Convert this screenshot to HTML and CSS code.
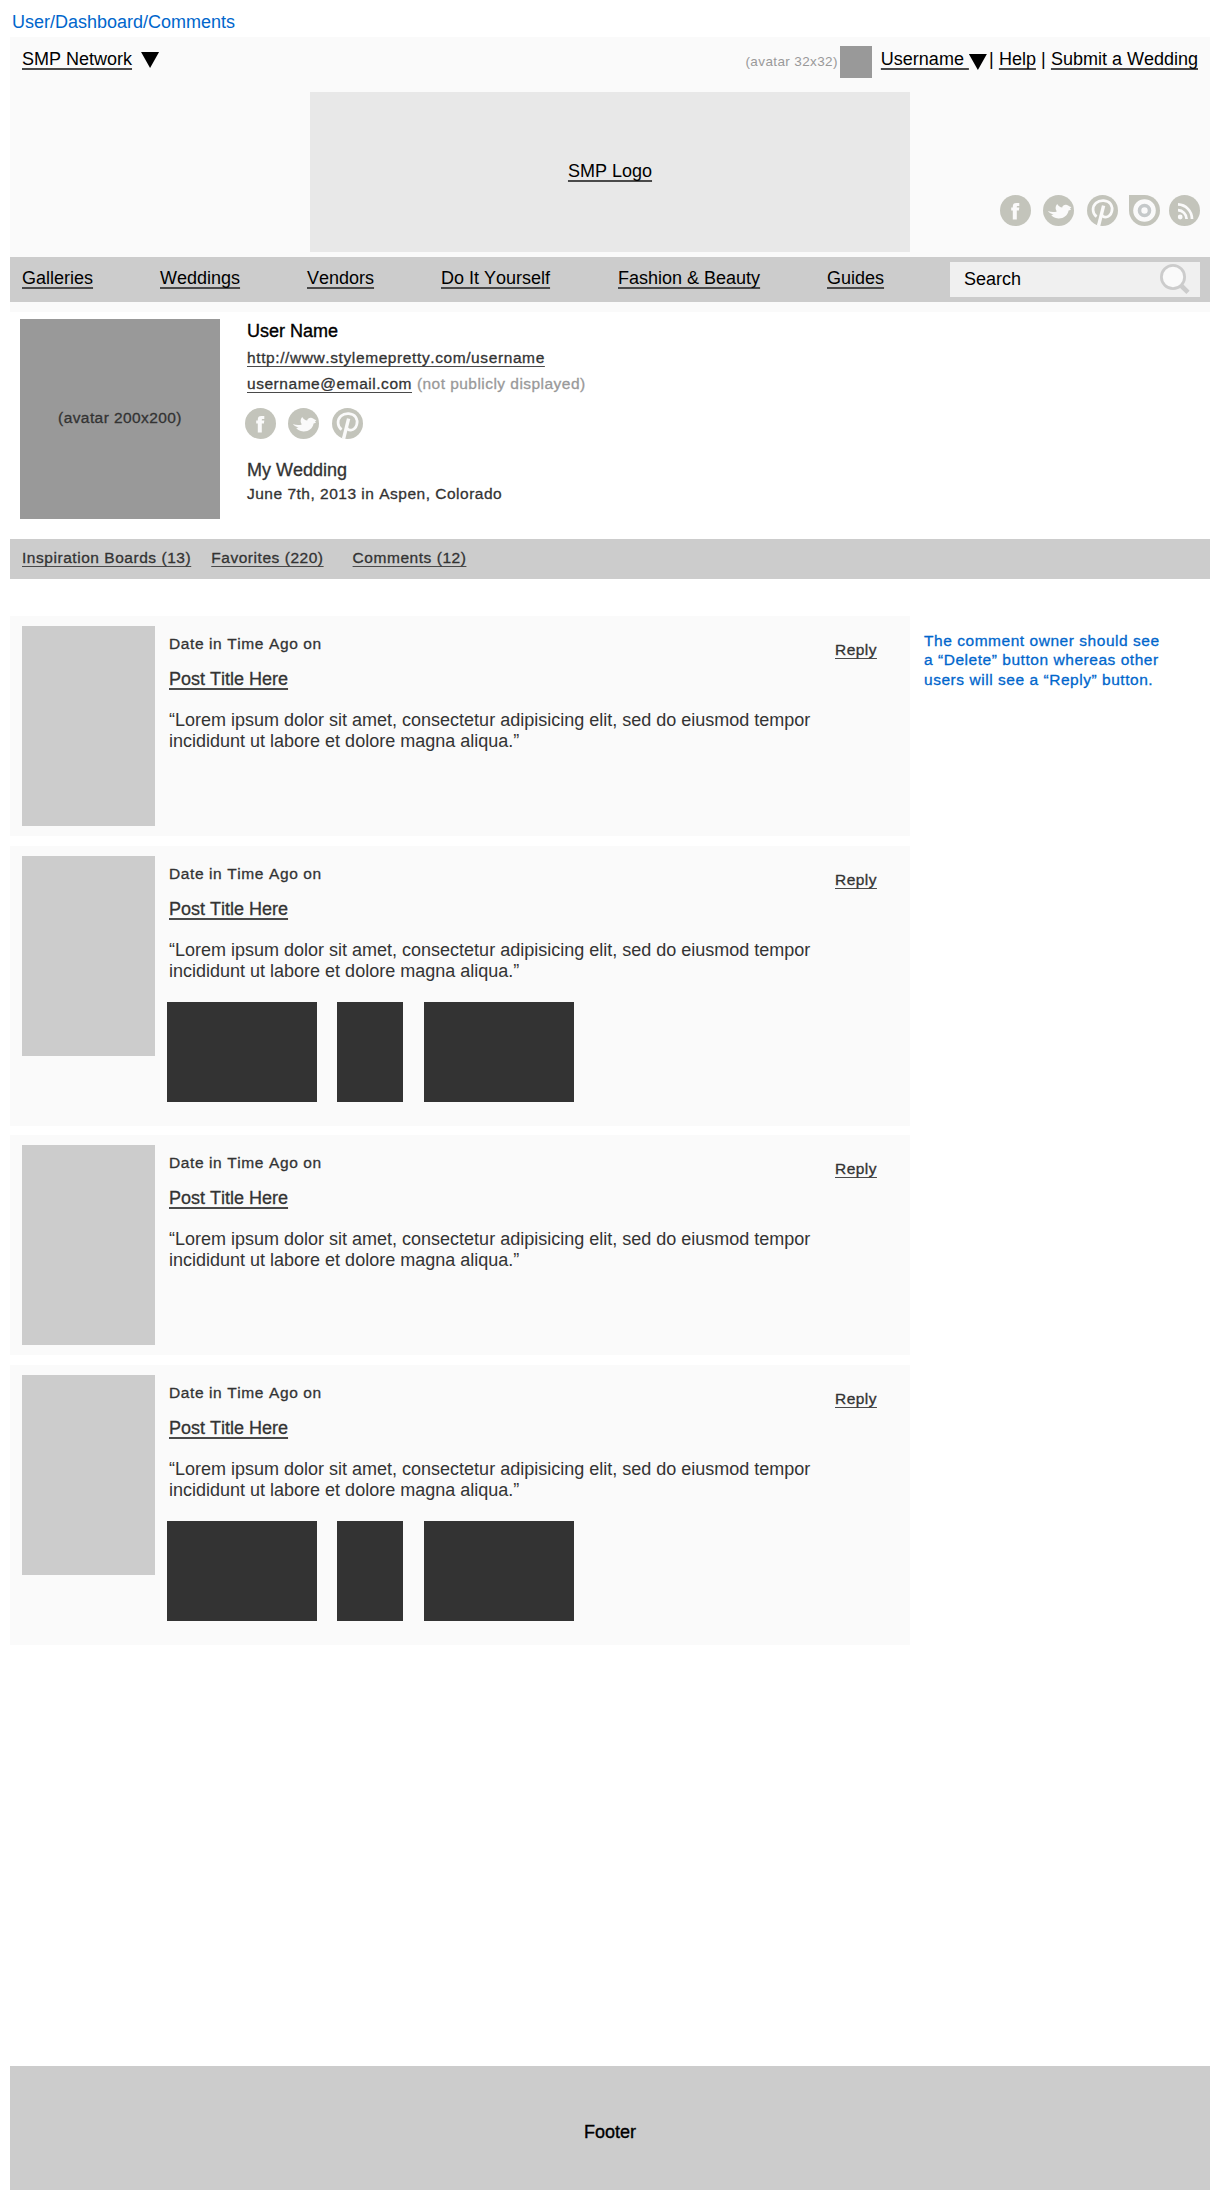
FILE: index.html
```html
<!DOCTYPE html>
<html lang="en">
<head>
<meta charset="utf-8">
<title>User/Dashboard/Comments</title>
<link rel="stylesheet" href="styles.css">
</head>
<body>
<svg class="sprite" width="0" height="0" aria-hidden="true">
  <symbol id="facebook" viewBox="0 0 31 31"><circle cx="15.5" cy="15.5" r="15.5"/><path class="w" d="M12.8 24.5V15.6H11.2V12.6H12.8V11.4C12.8 9.2 14 8 16.2 8H19.3V11H17.7C17 11 16.8 11.3 16.8 12V12.6H19.3L18.9 15.6H16.8V24.5Z"/></symbol>
  <symbol id="twitter" viewBox="0 0 31 31"><circle cx="15.5" cy="15.5" r="15.5"/><path class="w" d="M5 16C8 17.4 12 17.4 13.8 16.2C12.4 14.6 12 11.4 14.2 9C15.6 11.4 17.4 12.2 19.2 12.6C19.6 10.4 21.6 9.4 23.8 9.9C25 10.2 25.6 10.6 26.2 11.2L28.4 12.2L27 13.6L28 14.8L25.6 15.4C24.8 20.4 20.4 23.6 15.4 23.4C11.8 23.3 9.4 21.8 8.2 20L10.6 19.4C7.6 18.8 5.6 17.6 5 16Z"/></symbol>
  <symbol id="pinterest" viewBox="0 0 31 31"><circle cx="15.5" cy="15.5" r="15.5"/><path class="ws" d="M9.6 21.6C5 18.4 5 11.6 9 8C13 4.4 20.6 4.8 23.6 9C26.8 13.6 24.6 21 19.6 22C17.4 22.4 15.6 21.4 15 20"/><path class="ws stem" d="M16.6 10.6L11.5 31"/></symbol>
  <symbol id="target" viewBox="0 0 31 31"><path d="M0 0H15.5A15.5 15.5 0 1 1 0 15.5Z"/><circle class="w" cx="15.5" cy="15.5" r="11.3"/><circle class="hub" cx="15.5" cy="15.5" r="5"/></symbol>
  <symbol id="rss" viewBox="0 0 31 31"><circle cx="15.5" cy="15.5" r="15.5"/><circle class="w" cx="11.2" cy="22" r="2.4"/><path class="ws" d="M9 15.2A9 9 0 0 1 17.6 24M9 9.4A14.6 14.6 0 0 1 23 24"/></symbol>
</svg>

<p class="crumb">User/Dashboard/Comments</p>

<div class="page">
  <header class="header">
    <div class="topbar">
      <div class="network"><a>SMP Network</a><i class="caret"></i></div>
      <div class="account">
        <small>(avatar 32x32)</small><span class="avatar-sm"></span>
        <a class="user">Username </a><i class="caret"></i><span class="bar">|</span><a class="help">Help</a><span class="bar2">|</span><a>Submit a Wedding</a>
      </div>
    </div>
    <div class="brand">
      <div class="logo"><a>SMP Logo</a></div>
      <div class="social">
        <svg><use href="#facebook"/></svg><svg><use href="#twitter"/></svg><svg><use href="#pinterest"/></svg><svg><use href="#target"/></svg><svg><use href="#rss"/></svg>
      </div>
    </div>
    <nav class="nav">
      <a>Galleries</a><a>Weddings</a><a>Vendors</a><a>Do It Yourself</a><a>Fashion &amp; Beauty</a><a>Guides</a>
      <div class="search"><span>Search</span>
        <svg viewBox="0 0 30 30"><path d="M21.5 22L28 28.3"/><circle cx="13" cy="13" r="11.6"/></svg>
      </div>
    </nav>
  </header>

  <section class="profile">
    <div class="avatar-lg">(avatar 200x200)</div>
    <div class="info">
      <h1>User Name</h1>
      <p class="url"><a>http://www.stylemepretty.com/username</a></p>
      <p class="email"><a>username@email.com</a> <span>(not publicly displayed)</span></p>
      <div class="social"><svg><use href="#facebook"/></svg><svg><use href="#twitter"/></svg><svg><use href="#pinterest"/></svg></div>
      <h2>My Wedding</h2>
      <p class="date">June 7th, 2013 in Aspen, Colorado</p>
    </div>
  </section>

  <nav class="tabs"><a>Inspiration Boards (13)</a><a>Favorites (220)</a><a>Comments (12)</a></nav>

  <main class="main">
    <div class="comments">
      <article class="card">
        <div class="thumb"></div>
        <div class="body">
          <p class="when">Date in Time Ago on</p>
          <h3><a>Post Title Here</a></h3>
          <p class="quote">“Lorem ipsum dolor sit amet, consectetur adipisicing elit, sed do eiusmod tempor<br>incididunt ut labore et dolore magna aliqua.”</p>
        </div>
        <a class="reply">Reply</a>
      </article>
      <article class="card">
        <div class="thumb"></div>
        <div class="body">
          <p class="when">Date in Time Ago on</p>
          <h3><a>Post Title Here</a></h3>
          <p class="quote">“Lorem ipsum dolor sit amet, consectetur adipisicing elit, sed do eiusmod tempor<br>incididunt ut labore et dolore magna aliqua.”</p>
          <div class="images"><span></span><span></span><span></span></div>
        </div>
        <a class="reply">Reply</a>
      </article>
      <article class="card">
        <div class="thumb"></div>
        <div class="body">
          <p class="when">Date in Time Ago on</p>
          <h3><a>Post Title Here</a></h3>
          <p class="quote">“Lorem ipsum dolor sit amet, consectetur adipisicing elit, sed do eiusmod tempor<br>incididunt ut labore et dolore magna aliqua.”</p>
        </div>
        <a class="reply">Reply</a>
      </article>
      <article class="card">
        <div class="thumb"></div>
        <div class="body">
          <p class="when">Date in Time Ago on</p>
          <h3><a>Post Title Here</a></h3>
          <p class="quote">“Lorem ipsum dolor sit amet, consectetur adipisicing elit, sed do eiusmod tempor<br>incididunt ut labore et dolore magna aliqua.”</p>
          <div class="images"><span></span><span></span><span></span></div>
        </div>
        <a class="reply">Reply</a>
      </article>
    </div>
    <aside class="note">The comment owner should see<br>a “Delete” button whereas other<br>users will see a “Reply” button.</aside>
  </main>

  <footer class="footer">Footer</footer>
</div>
</body>
</html>
```
FILE: styles.css
```css
* { box-sizing: border-box; margin: 0; padding: 0; }

body {
  background: #fff;
  color: #000;
  font: 18px/20px "Liberation Sans", Arial, sans-serif;
  font-kerning: none;
  white-space: nowrap;
  height: 2200px;
}

h1, h2, h3 { font-size: 18px; font-weight: 400; }

a {
  text-decoration: underline 2px #4a4a4a;
  text-underline-offset: 3px;
  text-decoration-skip-ink: none;
}

.sprite { position: absolute; }

.crumb { padding: 12px 0 5px 12px; color: #06c; }

.page {
  display: flex;
  flex-direction: column;
  width: 1200px;
  height: 2153px;
  margin-left: 10px;
}

/* Header */
.header { height: 275px; background: #fafafa; }
.topbar { display: flex; justify-content: space-between; height: 55px; padding: 9px 12px 0; }
.network { display: flex; padding-top: 3px; }
.network .caret { margin: 3px 0 0 9px; }
.caret { width: 18px; height: 16px; background: #000; clip-path: polygon(0 0, 100% 0, 50% 100%); }
.account { display: flex; align-items: flex-start; }
.account > a, .account > span:not(.avatar-sm) { margin-top: 3px; }
.account small { margin: 8px 2px 0 0; font-size: 13.5px; line-height: 16px; letter-spacing: .38px; color: #999; }
.avatar-sm { width: 32px; height: 32px; margin-right: 9px; background: #999; }
.user { white-space: pre; }
.account .caret { margin-top: 8px; }
.bar { width: 12px; padding-left: 2px; }
.bar2 { width: 15px; padding-left: 5px; }

.brand { display: flex; padding-left: 300px; }
.logo { width: 600px; height: 160px; padding-top: 69px; background: #e8e8e8; text-align: center; }
.brand .social { margin: 103px 0 0 90px; }
.social { display: flex; fill: #c3c4bb; }
.social svg { width: 31px; height: 31px; }
.social svg + svg { margin-left: 12px; }
.social svg:nth-child(3) { margin-left: 13px; }
.social svg:nth-child(4) { margin-left: 11px; }
.social svg:nth-child(5) { margin-left: 9px; }
.w { fill: #fafafa; }
.ws { fill: none; stroke: #fafafa; stroke-width: 2.7; }
.stem { stroke-width: 3.4; }
.hub { fill: none; stroke: #c5c9ca; stroke-width: 3.6; }

.nav {
  display: grid;
  grid-template-columns: 138px 147px 134px 177px 209px 123px 250px;
  height: 45px;
  margin-top: 5px;
  padding: 5px 0 0 12px;
  background: #ccc;
}
.nav > a { margin-top: 6px; }
.search {
  display: flex;
  justify-content: space-between;
  height: 35px;
  padding: 2px 10px 0 14px;
  background: #f0f0f0;
}
.search span { margin-top: 5px; }
.search svg { width: 30px; height: 30px; fill: #fafafa; stroke: #ccc; stroke-width: 2.8; }
.search path { stroke-width: 4.6; }

/* Profile */
.profile { display: flex; height: 227px; padding: 7px 10px 0; }
.avatar-lg {
  width: 200px;
  height: 200px;
  margin-right: 27px;
  padding-top: 90px;
  background: #999;
  text-align: center;
}
.avatar-lg, .info p, .tabs, .when, .reply, .note {
  color: #333;
  font-size: 15.5px;
  line-height: 17px;
  letter-spacing: .54px;
  -webkit-text-stroke: .3px;
}
.avatar-lg { letter-spacing: .42px; }
.info p a, .tabs a, .reply { text-decoration-thickness: 1px; text-underline-offset: 3px; }
.info { padding-top: 2px; }
.info h1, .footer { -webkit-text-stroke: .35px; }
.info p.url { margin-top: 8px; letter-spacing: .6px; }
.info .email { margin-top: 9px; }
.email span { color: #999; letter-spacing: .46px; }
.info .social { margin: 16px 0 0 -2px; }
.info h2 { margin-top: 21px; color: #333; -webkit-text-stroke: .3px; }
.info .date { margin-top: 5px; letter-spacing: .5px; }

.tabs { display: flex; height: 40px; padding: 10px 12px 0; background: #ccc; }
.tabs a + a { margin-left: 20px; }
.tabs a:last-child { margin-left: 29px; }

/* Comments */
.main { display: flex; margin-top: 37px; }
.comments { width: 900px; }
.card { display: flex; margin-bottom: 10px; padding: 10px 0 10px 12px; background: #fafafa; }
.card:nth-child(2) { margin-bottom: 9px; }
.thumb { width: 133px; height: 200px; background: #ccc; }
.body { width: 680px; padding: 9px 0 0 14px; color: #333; }
.body h3 { margin-top: 17px; -webkit-text-stroke: .3px; }
.when { letter-spacing: .6px; }
.quote { margin-top: 21px; line-height: 21px; }
.images { display: flex; margin: 20px 0 14px -2px; }
.images span { width: 150px; height: 100px; background: #333; }
.images span:nth-child(2) { width: 66px; margin: 0 21px 0 20px; }
.reply { height: 17px; margin: 15px 0 0; letter-spacing: .46px; }
.note { padding: 15px 0 0 14px; color: #06c; line-height: 19.4px; letter-spacing: .54px; }

.footer { height: 124px; margin-top: auto; padding-top: 56px; background: #ccc; text-align: center; }
```
